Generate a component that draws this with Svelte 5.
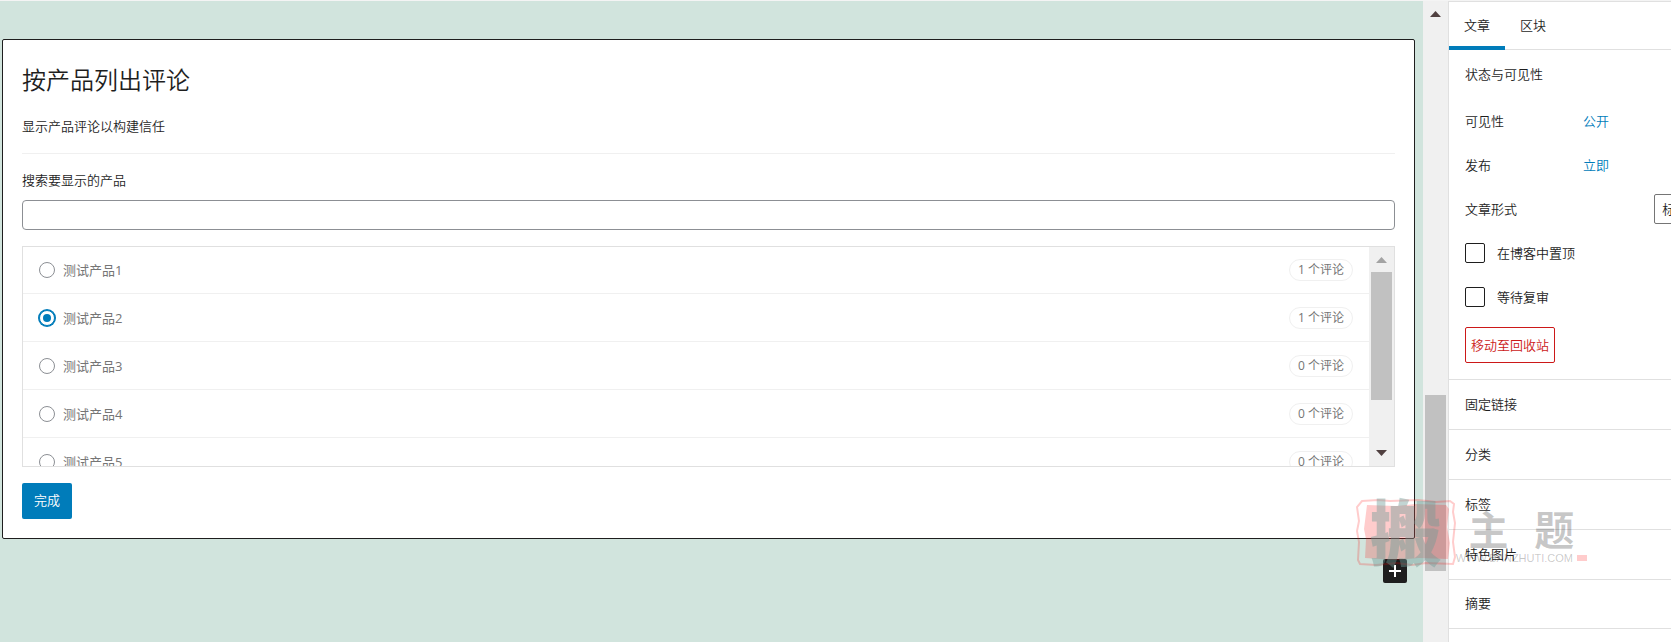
<script lang="ts">
	interface Product {
		id: number;
		name: string;
		reviews: number;
	}

	const products: Product[] = [
		{ id: 1, name: '测试产品1', reviews: 1 },
		{ id: 2, name: '测试产品2', reviews: 1 },
		{ id: 3, name: '测试产品3', reviews: 0 },
		{ id: 4, name: '测试产品4', reviews: 0 },
		{ id: 5, name: '测试产品5', reviews: 0 },
	];

	const panels = ['固定链接', '分类', '标签', '特色图片', '摘要'];

	let selected = $state(2);
	let search = $state('');
	let sticky = $state(false);
	let pending = $state(false);
</script>

{#snippet scrollbar(before: number, thumb: number, after: number, inList: boolean)}
	<div class="scrollbar" aria-hidden="true">
		<svg class="arrow" class:dim={inList} viewBox="0 0 25 25"><path d="M7 16h11l-5.5-6z" /></svg>
		<div class="track">
			<div style="flex-grow: {before}"></div>
			<div class="thumb" style="flex-grow: {thumb}"></div>
			<div style="flex-grow: {after}"></div>
		</div>
		{#if inList}
			<svg class="arrow" viewBox="0 0 25 25"><path d="M7 9h11l-5.5 6z" /></svg>
		{/if}
	</div>
{/snippet}

<div class="editor">
	<main class="canvas">
		<section class="card">
			<h1>按产品列出评论</h1>
			<p class="intro">显示产品评论以构建信任</p>
			<label class="search-label" for="product-search">搜索要显示的产品</label>
			<input id="product-search" class="search" type="text" bind:value={search} />

			<div class="list">
				<div class="rows" role="radiogroup" aria-label="产品">
					{#each products as product (product.id)}
						<label class="row">
							<input type="radio" name="product" value={product.id} bind:group={selected} />
							<span class="name">{product.name}</span>
							<span class="count">{product.reviews} 个评论</span>
						</label>
					{/each}
				</div>
				{@render scrollbar(0, 129, 41, true)}
			</div>

			<button class="primary" type="button">完成</button>
		</section>

		<button class="inserter" type="button" aria-label="添加区块">
			<svg viewBox="0 0 24 24"><path d="M12 6v12M6 12h12" /></svg>
		</button>
	</main>

	<div class="page-scroll">
		{@render scrollbar(369, 176, 71, false)}
	</div>

	<aside class="sidebar">
		<div class="tabs" role="tablist">
			<button class="tab active" type="button" role="tab" aria-selected="true">文章</button>
			<button class="tab" type="button" role="tab" aria-selected="false">区块</button>
		</div>

		<section class="status">
			<h2>状态与可见性</h2>
			<div class="field">
				<span class="field-name">可见性</span>
				<button class="link" type="button">公开</button>
			</div>
			<div class="field">
				<span class="field-name">发布</span>
				<button class="link" type="button">立即</button>
			</div>
			<div class="field">
				<label class="field-name wide" for="post-format">文章形式</label>
				<select id="post-format">
					<option>标准</option>
				</select>
			</div>
			<label class="field check">
				<input type="checkbox" bind:checked={sticky} />
				<span>在博客中置顶</span>
			</label>
			<label class="field check">
				<input type="checkbox" bind:checked={pending} />
				<span>等待复审</span>
			</label>
			<button class="trash" type="button">移动至回收站</button>
		</section>

		{#each panels as panel}
			<button class="panel" type="button">{panel}</button>
		{/each}
	</aside>

	<div class="watermark">
		<div class="seal">
			<svg viewBox="0 0 100 67" aria-hidden="true">
				<path
					class="frame"
					d="M6 2L22 1 34 2 62 1 80 3 94 2 98 5 97 13 99 24 97 43 99 58 97 65 70 64 56 66 41 64 20 66 4 65 2 61 3 43 1 32 3 22 1 8z"
				/>
				<path class="fill" d="M11 6L40 7 60 5 90 6 93 10 91 28 94 44 92 60 63 59 40 61 9 59 10 40 8 30z" />
			</svg>
			<span>搬</span>
		</div>
		<div class="brand">
			<div class="brand-name"><span>主</span><span>题</span></div>
			<div class="brand-url">WWW.BANZHUTI.COM<i></i></div>
		</div>
	</div>
</div>

<style>
	:global(body) {
		overflow: hidden;
		background: #fff;
	}

	.editor,
	.editor * {
		box-sizing: border-box;
	}

	.editor {
		position: relative;
		display: flex;
		height: 100vh;
		overflow: hidden;
		border-top: 1px solid #f4f4f4;
		background: #fff;
		color: #1e1e1e;
		font-family: 'Open Sans', 'Noto Sans CJK SC', sans-serif;
		font-size: 13px;
		font-weight: 350;
		line-height: 20px;
	}

	button,
	input,
	select {
		margin: 0;
		font: inherit;
		color: inherit;
	}

	button {
		border: 0;
		padding: 0;
		background: none;
		cursor: pointer;
	}

	.canvas {
		flex: 1;
		min-width: 0;
		padding: 38px 8px 0 2px;
		background: #d1e4dd;
	}

	.card {
		padding: 22px 19px 19px;
		border: 1px solid #1e1e1e;
		border-radius: 2px;
		background: #fff;
	}

	h1 {
		margin: 0;
		font-size: 24px;
		font-weight: 350;
		line-height: 36px;
	}

	.intro {
		margin: 18px 0 16px;
		padding-bottom: 17px;
		border-bottom: 1px solid #f0f0f0;
	}

	.search-label {
		display: block;
		margin-bottom: 10px;
	}

	.search {
		display: block;
		width: 100%;
		height: 30px;
		padding: 0 8px;
		border: 1px solid #8c8f94;
		border-radius: 4px;
		background: #fff;
	}

	.list {
		display: flex;
		height: 221px;
		margin: 16px 0;
		overflow: hidden;
		border: 1px solid #e0e0e0;
	}

	.rows {
		flex: 1;
		overflow: hidden;
	}

	.row {
		display: flex;
		align-items: center;
		height: 48px;
		padding: 0 16px;
		border-bottom: 1px solid #f0f0f0;
		color: #757575;
		font-weight: 400;
	}

	.row:first-child {
		height: 47px;
	}

	.row input {
		display: grid;
		place-items: center;
		width: 16px;
		height: 16px;
		margin-right: 8px;
		border: 1px solid #8c8f94;
		border-radius: 50%;
		appearance: none;
		background: #fff;
	}

	.row input:checked {
		border-color: #007cba;
		box-shadow: 0 0 0 1px #007cba;
	}

	.row input:checked::before {
		content: '';
		width: 8px;
		height: 8px;
		border-radius: 50%;
		background: #007cba;
	}

	.count {
		margin-left: auto;
		padding: 0 8px;
		border: 1px solid #f0f0f0;
		border-radius: 12px;
		font-size: 12px;
	}

	.scrollbar {
		display: flex;
		flex-direction: column;
		width: 25px;
		height: 100%;
		background: #f0f0f0;
	}

	.arrow {
		flex: none;
		width: 25px;
		height: 25px;
		fill: #504040;
	}

	.arrow.dim {
		fill: #a3a3a3;
	}

	.track {
		flex: 1;
		display: flex;
		flex-direction: column;
		padding: 0 2px;
	}

	.thumb {
		background: #c1c1c1;
	}

	.primary {
		display: block;
		height: 36px;
		padding: 0 12px 2px;
		border-radius: 2px;
		background: #007cba;
		color: #fff;
	}

	.inserter {
		display: block;
		width: 24px;
		height: 24px;
		margin: 20px 8px 0 auto;
		border-radius: 2px;
		background: #1e1e1e;
	}

	.inserter svg {
		display: block;
		stroke: #fff;
		stroke-width: 2;
	}

	.page-scroll {
		flex: none;
	}

	/* Wider than the room that is left, so its right side runs out of view. */
	.sidebar {
		flex: 0 0 280px;
		min-width: 0;
		margin-right: -57px;
		border-top: 1px solid #e0e0e0;
		border-left: 1px solid #e0e0e0;
		background: #fff;
	}

	.tabs {
		display: flex;
		height: 48px;
		box-shadow: inset 0 -1px #e0e0e0;
	}

	.tab {
		padding: 0 15px 2px;
	}

	.tab.active {
		box-shadow: inset 0 -4px #007cba;
	}

	.status {
		padding: 0 16px 16px;
	}

	h2 {
		margin: 0;
		padding-bottom: 1px;
		font-size: 13px;
		font-weight: 350;
		line-height: 48px;
	}

	.field {
		display: flex;
		align-items: center;
		height: 44px;
	}

	.field-name {
		width: 118px;
	}

	.field-name.wide {
		width: 190px;
	}

	.link {
		color: #007cba;
	}

	select {
		width: 58px;
		height: 30px;
		padding: 0 7px;
		border: 1px solid #757575;
		border-radius: 2px;
		appearance: none;
		background: #fff;
	}

	.check {
		gap: 12px;
	}

	.check input {
		width: 20px;
		height: 20px;
		border: 1px solid #1e1e1e;
		border-radius: 2px;
		appearance: none;
		background: #fff;
	}

	.trash {
		display: block;
		height: 36px;
		margin-top: 8px;
		padding: 0 5px;
		border: 1px solid #cc1818;
		border-radius: 2px;
		color: #cc1818;
	}

	.panel {
		display: block;
		width: 100%;
		height: 50px;
		padding: 0 16px 2px;
		border-top: 1px solid #e0e0e0;
		text-align: left;
	}

	.panel:last-child {
		border-bottom: 1px solid #e0e0e0;
	}

	/* Site mark laid over the editor */
	.watermark {
		position: absolute;
		top: 498px;
		right: 84px;
		display: flex;
		pointer-events: none;
	}

	.seal {
		display: grid;
		place-items: center;
		width: 100px;
		height: 67px;
	}

	.seal > * {
		grid-area: 1 / 1;
	}

	.seal svg {
		width: 100px;
		height: 67px;
	}

	.frame {
		fill: none;
		stroke: rgb(255 0 0 / 20%);
		stroke-width: 2;
	}

	.fill {
		fill: rgb(255 0 0 / 20%);
	}

	.seal span {
		color: rgb(110 155 150 / 42%);
		font-size: 72px;
		font-weight: 900;
		line-height: 67px;
	}

	.brand {
		padding-top: 12px;
		color: rgb(0 0 0 / 22%);
	}

	.brand-name {
		display: flex;
		justify-content: space-around;
		font-size: 40px;
		font-weight: 700;
		line-height: 38px;
	}

	.brand-url {
		display: flex;
		align-items: center;
		gap: 4px;
		font-family: 'Liberation Sans', sans-serif;
		font-size: 11px;
		font-weight: 400;
		line-height: 18px;
	}

	.brand-url i {
		width: 10px;
		height: 6px;
		background: rgb(255 0 0 / 20%);
	}
</style>
